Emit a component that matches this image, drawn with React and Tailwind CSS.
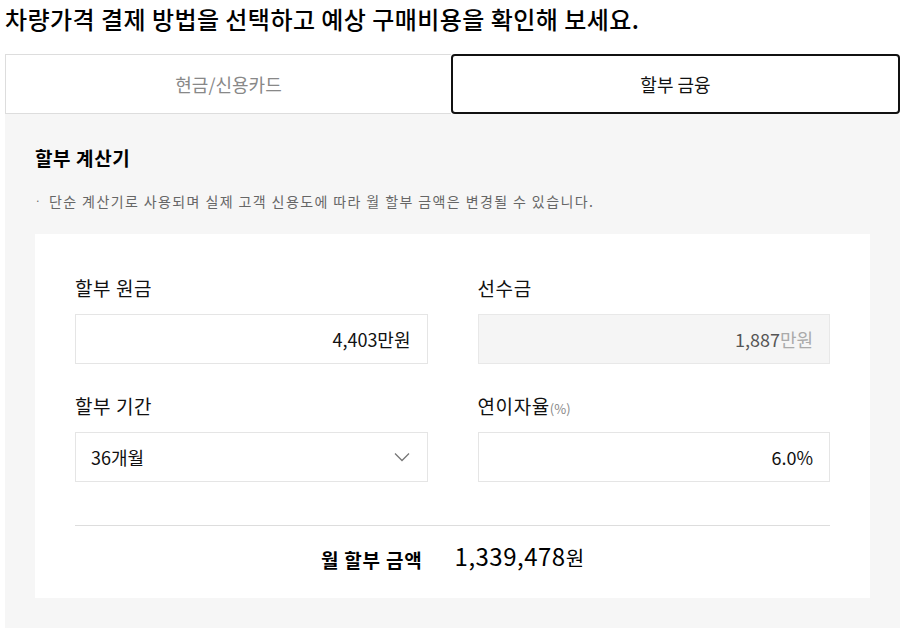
export default function App() {
  const font = { fontFamily: '"Noto Sans CJK KR", "Noto Sans", sans-serif' };
  return (
    <div className="w-[903px] h-[632px] bg-white text-[#111]" style={font}>
      <div className="pl-[5px] pr-[3px]">
        <h1 className="h-[54px] pt-[3px] text-[24px] font-medium leading-[32px] tracking-[0.45px] text-black">
          차량가격 결제 방법을 선택하고 예상 구매비용을 확인해 보세요.
        </h1>
        <div className="flex h-[60px]">
          <button className="flex-1 border border-[#dddddd] border-r-0 bg-white text-[18px] text-[#888] leading-none">
            현금/신용카드
          </button>
          <button className="flex-1 rounded-[4px] border-2 border-[#111] bg-white text-[18px] text-[#111] leading-none">
            할부 금융
          </button>
        </div>
        <div className="bg-[#f6f6f6] px-[30px] pt-[30px] pb-[30px]">
          <h2 className="text-[19px] font-bold leading-[28px] tracking-[0.6px] text-black">할부 계산기</h2>
          <p className="mt-[19px] flex items-center gap-[7px] text-[14px] leading-[20px] tracking-[1.4px] text-[#666]">
            <span className="text-[10px]">·</span>
            <span>단순 계산기로 사용되며 실제 고객 신용도에 따라 월 할부 금액은 변경될 수 있습니다.</span>
          </p>
          <div className="mt-[23px] bg-white px-[40px] pt-[42px] pb-[22px]">
            <div className="grid grid-cols-2 gap-x-[50px] gap-y-[30px]">
              <div>
                <div className="h-[24px] text-[19px] leading-[24px] tracking-[0.6px] text-[#111]">할부 원금</div>
                <div className="mt-[14px] flex h-[50px] items-center justify-end border border-[#e5e5e5] px-[16px] text-[18px] text-[#111]">
                  4,403만원
                </div>
              </div>
              <div>
                <div className="h-[24px] text-[19px] leading-[24px] tracking-[0.6px] text-[#111]">선수금</div>
                <div className="mt-[14px] flex h-[50px] items-center justify-end border border-[#e8e8e8] bg-[#f5f5f5] px-[16px] text-[18px] text-[#555]">
                  1,887<span className="text-[#aaa]">만원</span>
                </div>
              </div>
              <div>
                <div className="h-[24px] text-[19px] leading-[24px] tracking-[0.6px] text-[#111]">할부 기간</div>
                <div className="mt-[14px] flex h-[50px] items-center justify-between border border-[#e5e5e5] pl-[15px] pr-[17px] text-[18px] text-[#111]">
                  <span>36개월</span>
                  <svg width="16" height="10" viewBox="0 0 16 10" fill="none">
                    <path d="M1 1.5L8 8.5L15 1.5" stroke="#777" strokeWidth="1.3" />
                  </svg>
                </div>
              </div>
              <div>
                <div className="flex h-[24px] items-baseline text-[19px] leading-[24px] tracking-[0.6px] text-[#111]">
                  <span>연이자율</span>
                  <span className="text-[13px] leading-none tracking-normal text-[#888]">(%)</span>
                </div>
                <div className="mt-[14px] flex h-[50px] items-center justify-end border border-[#e5e5e5] px-[16px] text-[18px] text-[#111]">
                  6.0%
                </div>
              </div>
            </div>
            <div className="mt-[43px] border-t border-[#dddddd]" />
            <div className="flex h-[50px] items-end justify-center gap-[32px] pb-[2px]">
              <span className="text-[19px] font-bold leading-[28px] tracking-[0.8px] text-black">월 할부 금액</span>
              <span className="leading-[30px] text-black">
                <span className="text-[24px] tracking-[0.5px]">1,339,478</span>
                <span className="text-[20px]">원</span>
              </span>
            </div>
          </div>
        </div>
      </div>
    </div>
  );
}
